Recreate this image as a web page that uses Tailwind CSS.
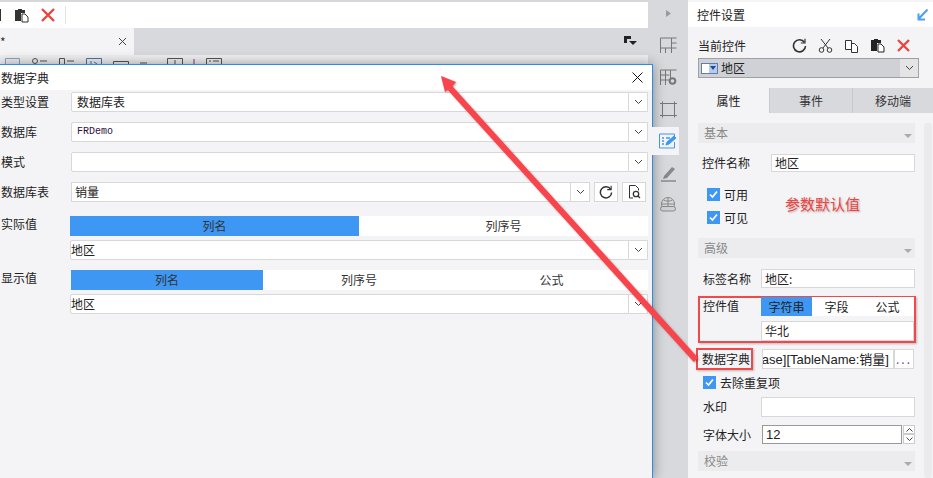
<!DOCTYPE html>
<html><head><meta charset="utf-8">
<script src="https://cdn.jsdelivr.net/npm/@tailwindcss/browser@4"></script>
</head>
<body class="m-0 overflow-hidden bg-[#d6d7da]">
<div class="relative w-[933px] h-[478px] overflow-hidden flex text-[12px] leading-none text-[#222] bg-[#d6d7da] font-['Noto_Sans_CJK_SC','Liberation_Sans',sans-serif]">

  <!-- left work area -->
  <div class="w-[648px] shrink-0 flex flex-col pt-[2px]">
    <div class="h-[26px] bg-white flex items-center relative">
      <div class="w-[1px] h-[12px] bg-[#333] ml-0"></div>
      <svg class="ml-[13px]" width="15" height="15" viewBox="0 0 15 15"><path d="M1 2h3V1h4v1h3v3H7v8H1z" fill="#333"/><path d="M8 6h3l3 3v5H8z" fill="#fff" stroke="#333"/></svg>
      <svg class="ml-[11px]" width="16" height="16" viewBox="0 0 16 16"><path d="M2 2l12 12M14 2L2 14" stroke="#f0423c" stroke-width="2.4"/></svg>
      <div class="w-[1px] h-[18px] bg-[#e2e2e2] ml-[9px]"></div>
    </div>
    <div class="h-[27px] flex bg-[#d8d9dc]">
      <div class="w-[134px] bg-[#f4f4f6] flex items-center justify-between pr-[7px] pl-0">
        <span class="text-[#333]">*</span>
        <svg width="9" height="9" viewBox="0 0 9 9"><path d="M1 1l7 7M8 1L1 8" stroke="#444" stroke-width="1"/></svg>
      </div>
      <div class="flex-1 flex items-center justify-end pr-[11px]">
        <svg width="13" height="11" viewBox="0 0 13 11"><path d="M0 0h7v3H3v4H0z" fill="#222"/><path d="M5 5h8l-4 4z" fill="#222"/></svg>
      </div>
    </div>
    <div class="h-[10px] bg-[#f0f0f2] overflow-hidden">
      <svg class="block" width="240" height="10" viewBox="0 0 240 10" fill="none" stroke="#555">
        <path d="M5.500 9V3.500h14V9" stroke="#8aa6c8"/>
        <circle cx="35" cy="6" r="2.500"/><path d="M40 6h7"/>
        <path d="M59.500 9V3.500h5V9M67 6h7"/>
        <path d="M86.500 9V3.500h15V9" stroke="#4a76b0"/><path d="M91 9V6M94 7l3 2" stroke="#4a76b0"/>
        <path d="M113.500 9V6.500h15V9"/>
        <path d="M140 8h7"/>
        <path d="M167.500 9V3.500h15V9M175 5v4"/>
        <path d="M194 4v5" stroke="#7a3a7a"/>
        <path d="M206.500 9V3.500h15V9M209 6h2M213 6h6"/>
      </svg>
    </div>
    <div class="flex-1 bg-[#d6d7da]"></div>
  </div>

  <!-- icon strip -->
  <div class="w-[40px] shrink-0 flex flex-col items-center pt-[9px] bg-[#d8d9dc]">
    <svg width="7" height="9" viewBox="0 0 7 9"><path d="M1 1l5 3.500L1 8z" fill="#9a9a9a"/></svg>
    <div class="flex flex-col items-center mt-[19px] gap-[15px]">
      <svg width="17" height="17" viewBox="0 0 17 17" fill="none" stroke="#777"><path d="M.5 1h16M.5 1v15M.5 11h16M5.500 11v5M11.500 1v15M11.500 6h5"/></svg>
      <svg width="17" height="17" viewBox="0 0 17 17" fill="none" stroke="#777"><path d="M.5 1h16M.5 1v15M.5 6h9M.5 11h9M5.500 1v15M10.500 1v8"/><circle cx="12.500" cy="12" r="2.800" stroke-width="2"/></svg>
      <svg width="17" height="17" viewBox="0 0 17 17" fill="none" stroke="#777"><path d="M2.500 .5v16M14.500 .5v16M0 2.500h17M0 14.500h17"/></svg>
    </div>
    <div class="relative z-10 w-[31px] h-[28px] mt-[9px] -ml-[9px] bg-[#f4f4f6] flex items-center justify-center pl-[7px] pr-[0px]">
      <svg width="17" height="16" viewBox="0 0 17 16" fill="none" stroke="#3e97f3"><path d="M.5 1h15v4M.5 1v14h15V9"/><path d="M3 5h2M7 5h4M3 8h2M3 11h2" stroke-width="1.500"/><path d="M7 12l1-3 7-6 2 2-7 6z" fill="#3e97f3"/></svg>
    </div>
    <svg class="mt-[10px]" width="17" height="17" viewBox="0 0 17 17"><path d="M4 11l8-9 3 2-8 9-4 1z" fill="#888"/><path d="M1 16h15" stroke="#888" stroke-width="1.500"/></svg>
    <svg class="mt-[15px]" width="17" height="17" viewBox="0 0 17 17" fill="none" stroke="#888"><circle cx="8" cy="7" r="6.500"/><path d="M1.500 7h13M8 .5v13M3.500 3c3 1.500 6 1.500 9 0"/><rect x=".5" y="9.500" width="15" height="4.500" rx="2.200" fill="#d0d1d4"/></svg>
  </div>

  <!-- right panel -->
  <div class="w-[245px] shrink-0 flex flex-col pt-[2px] bg-[#f4f4f6]">
    <div class="h-[25px] bg-white flex items-center justify-between pl-[9px] pr-[5px]">
      <span>控件设置</span>
      <svg width="11" height="12" viewBox="0 0 11 12" fill="none" stroke="#4aa0f5" stroke-width="2"><path d="M10.500 .5L1.500 10M1.500 4.500v6h6.500"/></svg>
    </div>
    <div class="h-[61px] flex flex-col pl-[10px] pr-[10px] pt-[8px]">
      <div class="h-[21px] flex items-center justify-between pr-[12px]">
        <span>当前控件</span>
        <div class="flex items-center gap-[11px]">
          <svg width="15" height="15" viewBox="0 0 15 15" fill="none" stroke="#333" stroke-width="1.600"><path d="M12.500 4.500A6 6 0 1 0 13.500 8"/><path d="M13 .8V5H8.800" stroke-width="1.200"/></svg>
          <svg width="15" height="15" viewBox="0 0 15 15" fill="none" stroke="#333"><path d="M3 1l7 9M12 1l-7 9"/><circle cx="3.500" cy="12" r="2.300"/><circle cx="11.500" cy="12" r="2.300"/></svg>
          <svg width="15" height="14" viewBox="0 0 15 14" fill="none" stroke="#333"><path d="M1.500 1.500h6v9h-6zM7.500 4.500h3l3 3v6h-6z" fill="#fff"/></svg>
          <svg width="15" height="15" viewBox="0 0 15 15"><path d="M1 2h3V1h4v1h3v3H7v8H1z" fill="#222"/><path d="M8 6h3l3 3v5H8z" fill="#fff" stroke="#222"/></svg>
          <svg width="15" height="15" viewBox="0 0 15 15"><path d="M2 2l11 11M13 2L2 13" stroke="#f0423c" stroke-width="2.300"/></svg>
        </div>
      </div>
      <div class="mt-[2px] h-[20px] w-[221px] border border-[#a0a0a0] bg-[#d0d1d6] flex items-center">
        <div class="ml-[2px] flex h-[11px] border border-[#5a7fb5]">
          <div class="w-[7px] bg-white"></div>
          <div class="w-[8px] bg-[#b9cbe8] flex items-center justify-center"><div class="border-x-[3px] border-x-transparent border-t-[4px] border-t-[#1d4b9c]"></div></div>
        </div>
        <span class="ml-[3px] flex-1">地区</span>
        <div class="w-[18px] h-full bg-[#e4e4e6] flex items-center justify-center">
          <svg width="9" height="6" viewBox="0 0 9 6" fill="none" stroke="#444"><path d="M1 1l3.500 3.500L8 1"/></svg>
        </div>
      </div>
    </div>
    <div class="h-[25px] flex">
      <div class="w-[81px] flex items-center justify-center bg-[#f4f4f6]">属性</div>
      <div class="w-[83px] flex items-center justify-center bg-[#d8d9dc] border-l border-[#c8c9cc] text-[#333]">事件</div>
      <div class="w-[81px] flex items-center justify-center bg-[#d8d9dc] border-l border-[#c8c9cc] text-[#333]">移动端</div>
    </div>
    <div class="flex-1 relative pl-[10px] pt-[10px]">
      <div class="absolute right-[1px] top-[10px] bottom-0 w-[8px] bg-[#ebebed] rounded-[3px]"></div>
      <div class="w-[217px] flex flex-col">
        <div class="h-[20px] bg-[#ececee] flex items-center justify-between pl-[6px] pr-[3px] text-[#888]"><span>基本</span><div class="mt-[5px] border-x-[4px] border-x-transparent border-t-[4px] border-t-[#aaa]"></div></div>
        <div class="mt-[11px] h-[18px] flex items-center pl-[4px]"><span class="w-[69px]">控件名称</span><div class="flex-1 h-full bg-white border border-[#d8d8d8] flex items-center pl-[3px]">地区</div></div>
        <div class="flex flex-col pl-[9px] mt-[16px] gap-[10px]">
          <div class="h-[13px] flex items-center gap-[4px]"><svg width="13" height="13" viewBox="0 0 13 13"><rect width="13" height="13" fill="#3e97f3"/><path d="M3 6.500l2.500 2.500L10 3.500" fill="none" stroke="#fff" stroke-width="1.700"/></svg>可用</div>
          <div class="h-[13px] flex items-center gap-[4px]"><svg width="13" height="13" viewBox="0 0 13 13"><rect width="13" height="13" fill="#3e97f3"/><path d="M3 6.500l2.500 2.500L10 3.500" fill="none" stroke="#fff" stroke-width="1.700"/></svg>可见</div>
        </div>
        <div class="mt-[14px] h-[20px] bg-[#ececee] flex items-center justify-between pl-[6px] pr-[3px] text-[#888]"><span>高级</span><div class="mt-[5px] border-x-[4px] border-x-transparent border-t-[4px] border-t-[#aaa]"></div></div>
        <div class="mt-[11px] h-[19px] flex items-center pl-[5px]"><span class="w-[58px]">标签名称</span><div class="flex-1 h-full bg-white border border-[#d8d8d8] flex items-center pl-[3px]">地区:</div></div>
        <div class="mt-[8px] w-[218px] h-[47px] border-2 border-[#ef4a49] flex flex-col shadow-[1px_1px_2px_rgba(0,0,0,0.25)]">
          <div class="flex h-[19px] -mt-[1px]">
            <span class="w-[61px] pl-[3px] pt-[3px]">控件值</span>
            <div class="flex-1 flex bg-white">
              <div class="w-[51px] bg-[#3e97f3] flex items-center justify-center">字符串</div>
              <div class="w-[49px] flex items-center justify-center">字段</div>
              <div class="flex-1 flex items-center justify-center">公式</div>
            </div>
          </div>
          <div class="ml-[61px] mt-[5px] h-[20px] bg-white border border-[#d8d8d8] flex items-center pl-[3px]">华北</div>
        </div>
        <div class="mt-[5px] h-[22px] flex items-center -ml-[2px]">
          <div class="w-[57px] h-[22px] border-2 border-[#ef4a49] flex items-center pl-[4px] shrink-0 shadow-[1px_1px_2px_rgba(0,0,0,0.25)]">数据字典</div>
          <div class="ml-[9px] w-[132px] h-[20px] bg-white border border-[#d8d8d8] overflow-hidden whitespace-nowrap flex items-center justify-end pr-[4px] text-[13px] font-['Liberation_Sans','Noto_Sans_CJK_SC',sans-serif]"><span class="shrink-0">base][TableName:销量]</span></div>
          <div class="w-[20px] h-[20px] bg-white border border-[#d8d8d8] flex items-center justify-center tracking-[2px] text-[#7a4a9a]">...</div>
        </div>
        <div class="mt-[6px] h-[13px] flex items-center gap-[4px] pl-[5px]"><svg width="13" height="13" viewBox="0 0 13 13"><rect width="13" height="13" fill="#3e97f3"/><path d="M3 6.500l2.500 2.500L10 3.500" fill="none" stroke="#fff" stroke-width="1.700"/></svg>去除重复项</div>
        <div class="mt-[8px] h-[20px] flex items-center pl-[5px]"><span class="w-[58px]">水印</span><div class="flex-1 h-full bg-white border border-[#d8d8d8]"></div></div>
        <div class="mt-[8px] h-[19px] flex items-center pl-[5px]"><span class="w-[59px]">字体大小</span>
          <div class="w-[140px] h-full bg-white border border-[#999] flex items-center pl-[3px] text-[13px] font-['Liberation_Sans',sans-serif]">12</div>
          <div class="flex-1 ml-[1px] h-[19px] flex flex-col">
            <div class="h-[9px] bg-white border border-[#ccc] flex items-center justify-center"><svg width="7" height="4" viewBox="0 0 7 4" fill="none" stroke="#444"><path d="M.5 3.500l3-3 3 3"/></svg></div>
            <div class="h-[10px] bg-white border border-[#ccc] flex items-center justify-center"><svg width="7" height="4" viewBox="0 0 7 4" fill="none" stroke="#444"><path d="M.5.5l3 3 3-3"/></svg></div>
          </div>
        </div>
        <div class="mt-[7px] h-[20px] bg-[#ececee] flex items-center justify-between pl-[6px] pr-[3px] text-[#888]"><span>校验</span><div class="mt-[5px] border-x-[4px] border-x-transparent border-t-[4px] border-t-[#aaa]"></div></div>
      </div>
      <span class="absolute left-[97px] top-[83px] text-[15px] text-[#f2433f] [text-shadow:1px_1px_2px_rgba(0,0,0,0.3)]">参数默认值</span>
    </div>
  </div>

  <!-- dialog window -->
  <div class="absolute left-[-1px] top-[64px] w-[654px] h-[415px] bg-[#f4f4f6] border border-[#2b8be8] flex flex-col shadow-[0_0_12px_rgba(0,0,0,0.4)]">
    <div class="h-[25px] bg-white flex items-center justify-between pl-[1px] pr-[9px]">
      <span>数据字典</span>
      <svg width="11" height="11" viewBox="0 0 11 11"><path d="M.5.5l10 10M10.500.5l-10 10" stroke="#111" stroke-width="1"/></svg>
    </div>
    <div class="flex flex-col pl-[1px] pt-[2px] pr-[4px]">
      <div class="h-[20px] flex items-center"><span class="w-[70px]">类型设置</span><div class="flex-1 h-full bg-white border border-[#d8d8d8] rounded-l-[2px] flex items-center justify-between pl-[5px]"><span>数据库表</span><div class="w-[19px] h-full border-l border-[#d8d8d8] flex items-center justify-center"><svg width="9" height="6" viewBox="0 0 9 6" fill="none" stroke="#444"><path d="M1 1l3.500 3.500L8 1"/></svg></div></div></div>
      <div class="h-[20px] mt-[10px] flex items-center"><span class="w-[70px]">数据库</span><div class="flex-1 h-full bg-white border border-[#d8d8d8] rounded-l-[2px] flex items-center justify-between pl-[5px]"><span class="font-['Liberation_Mono',monospace] text-[10px] text-[#301040]">FRDemo</span><div class="w-[19px] h-full border-l border-[#d8d8d8] flex items-center justify-center"><svg width="9" height="6" viewBox="0 0 9 6" fill="none" stroke="#444"><path d="M1 1l3.500 3.500L8 1"/></svg></div></div></div>
      <div class="h-[20px] mt-[10px] flex items-center"><span class="w-[70px] -mt-[1px]">模式</span><div class="flex-1 h-full bg-white border border-[#d8d8d8] rounded-l-[2px] flex items-center justify-end"><div class="w-[19px] h-full border-l border-[#d8d8d8] flex items-center justify-center"><svg width="9" height="6" viewBox="0 0 9 6" fill="none" stroke="#444"><path d="M1 1l3.500 3.500L8 1"/></svg></div></div></div>
      <div class="h-[20px] mt-[10px] flex items-center"><span class="w-[70px]">数据库表</span>
        <div class="w-[519px] h-full bg-white border border-[#d8d8d8] flex items-center justify-between pl-[3px]"><span>销量</span><div class="w-[19px] h-full border-l border-[#d8d8d8] flex items-center justify-center"><svg width="9" height="6" viewBox="0 0 9 6" fill="none" stroke="#444"><path d="M1 1l3.500 3.500L8 1"/></svg></div></div>
        <div class="ml-[4px] w-[24px] h-full bg-white border border-[#d8d8d8] flex items-center justify-center"><svg width="14" height="14" viewBox="0 0 15 15" fill="none" stroke="#333" stroke-width="1.600"><path d="M12.500 4.500A6 6 0 1 0 13.500 8"/><path d="M13 .8V5H8.800" stroke-width="1.200"/></svg></div>
        <div class="ml-[4px] w-[24px] h-full bg-white border border-[#d8d8d8] flex items-center justify-center"><svg width="13" height="14" viewBox="0 0 13 14" fill="none" stroke="#333"><path d="M5 13H1.500V.5h6l3 3v2"/><circle cx="8" cy="9" r="2.700" stroke-width="1.300"/><path d="M10 11l2 2" stroke-width="1.300"/></svg></div>
      </div>
      <div class="h-[20px] mt-[14px] flex items-center"><span class="w-[69px] -mt-[4px]">实际值</span>
        <div class="flex-1 h-full flex bg-white"><div class="w-[289px] bg-[#3e97f3] flex items-center justify-center text-[#333]">列名</div><div class="flex-1 flex items-center justify-center text-[#333]">列序号</div></div>
      </div>
      <div class="h-[20px] mt-[4px] ml-[69px] bg-white border border-[#d8d8d8] rounded-l-[2px] flex items-center justify-between"><span>地区</span><div class="w-[19px] h-full border-l border-[#d8d8d8] flex items-center justify-center"><svg width="9" height="6" viewBox="0 0 9 6" fill="none" stroke="#444"><path d="M1 1l3.500 3.500L8 1"/></svg></div></div>
      <div class="h-[20px] mt-[10px] flex items-center"><span class="w-[70px] -mt-[4px]">显示值</span>
        <div class="flex-1 h-full flex bg-white"><div class="w-[192px] bg-[#3e97f3] flex items-center justify-center text-[#333]">列名</div><div class="w-[192px] flex items-center justify-center text-[#333]">列序号</div><div class="flex-1 flex items-center justify-center text-[#333]">公式</div></div>
      </div>
      <div class="h-[20px] mt-[4px] ml-[69px] bg-white border border-[#d8d8d8] rounded-l-[2px] flex items-center justify-between"><span>地区</span><div class="w-[19px] h-full border-l border-[#d8d8d8] flex items-center justify-center"><svg width="9" height="6" viewBox="0 0 9 6" fill="none" stroke="#444"><path d="M1 1l3.500 3.500L8 1"/></svg></div></div>
    </div>
  </div>

  <!-- annotation arrow -->
  <svg class="absolute left-0 top-0 z-20 pointer-events-none drop-shadow-[1px_1px_1px_rgba(0,0,0,0.3)]" width="933" height="478" viewBox="0 0 933 478">
    <path d="M450 88L696 360" stroke="#f8444a" stroke-width="6" fill="none"/>
    <path d="M441 76L456 82 452 87 445 92z" fill="#f8444a"/>
  </svg>
</div>
</body></html>
